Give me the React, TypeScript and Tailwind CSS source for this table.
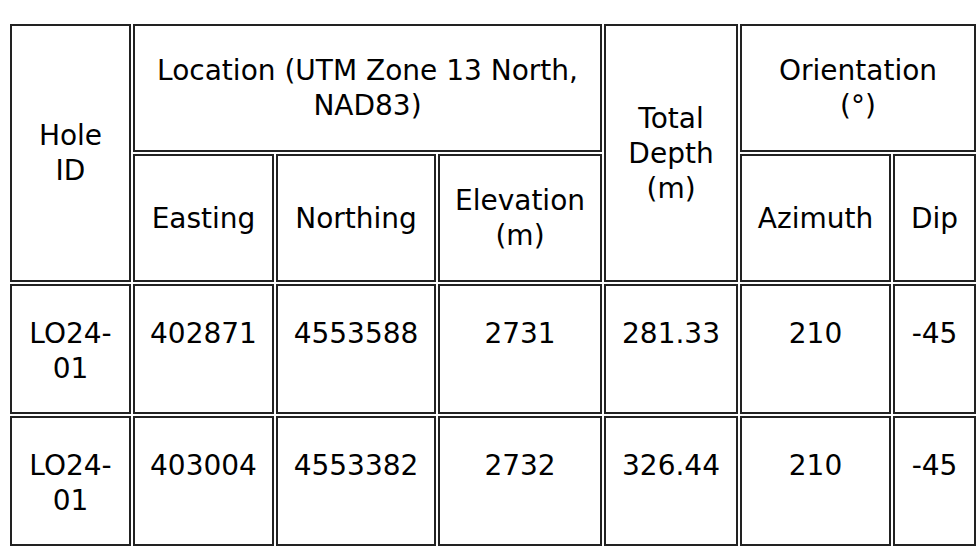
import { FunctionComponent, ReactNode } from "react";

interface Hole {
  id: string;
  easting: string;
  northing: string;
  elevation: string;
  depth: string;
  azimuth: string;
  dip: string;
}

const holes: Hole[] = [
  {
    id: "LO24-",
    easting: "402871",
    northing: "4553588",
    elevation: "2731",
    depth: "281.33",
    azimuth: "210",
    dip: "-45",
  },
  {
    id: "LO24-",
    easting: "403004",
    northing: "4553382",
    elevation: "2732",
    depth: "326.44",
    azimuth: "210",
    dip: "-45",
  },
];

const cell = "border-2 border-[#222] text-center whitespace-nowrap";

const Th: FunctionComponent<{
  children: ReactNode;
  colSpan?: number;
  rowSpan?: number;
}> = ({ children, colSpan, rowSpan }) => (
  <th
    colSpan={colSpan}
    rowSpan={rowSpan}
    className={`${cell} px-2 py-[27px] align-middle font-normal`}
  >
    {children}
  </th>
);

const Td: FunctionComponent<{ children: ReactNode }> = ({ children }) => (
  <td className={`${cell} px-2 pt-[30px] pb-[26px] align-top`}>{children}</td>
);

export default function App() {
  return (
    <div className="min-h-screen bg-white pl-2 pt-[22px]">
      <table
        className="w-[970px] table-fixed border-separate border-spacing-0.5 text-[28px] leading-[35px] text-black"
        style={{ fontFamily: '"DejaVu Sans", Verdana, sans-serif' }}
      >
        <colgroup>
          <col className="w-[121px]" />
          <col className="w-[141px]" />
          <col className="w-[160px]" />
          <col className="w-[164px]" />
          <col className="w-[134px]" />
          <col className="w-[151px]" />
          <col className="w-[83px]" />
        </colgroup>
        <thead>
          <tr>
            <Th rowSpan={2}>
              Hole
              <br />
              ID
            </Th>
            <Th colSpan={3}>
              Location (UTM Zone 13 North,
              <br />
              NAD83)
            </Th>
            <Th rowSpan={2}>
              Total
              <br />
              Depth
              <br />
              (m)
            </Th>
            <Th colSpan={2}>
              Orientation
              <br />
              (°)
            </Th>
          </tr>
          <tr>
            <Th>Easting</Th>
            <Th>Northing</Th>
            <Th>
              Elevation
              <br />
              (m)
            </Th>
            <Th>Azimuth</Th>
            <Th>Dip</Th>
          </tr>
        </thead>
        <tbody>
          {holes.map((h, i) => (
            <tr key={i}>
              <Td>
                {h.id}
                <br />
                01
              </Td>
              <Td>{h.easting}</Td>
              <Td>{h.northing}</Td>
              <Td>{h.elevation}</Td>
              <Td>{h.depth}</Td>
              <Td>{h.azimuth}</Td>
              <Td>{h.dip}</Td>
            </tr>
          ))}
        </tbody>
      </table>
    </div>
  );
}
